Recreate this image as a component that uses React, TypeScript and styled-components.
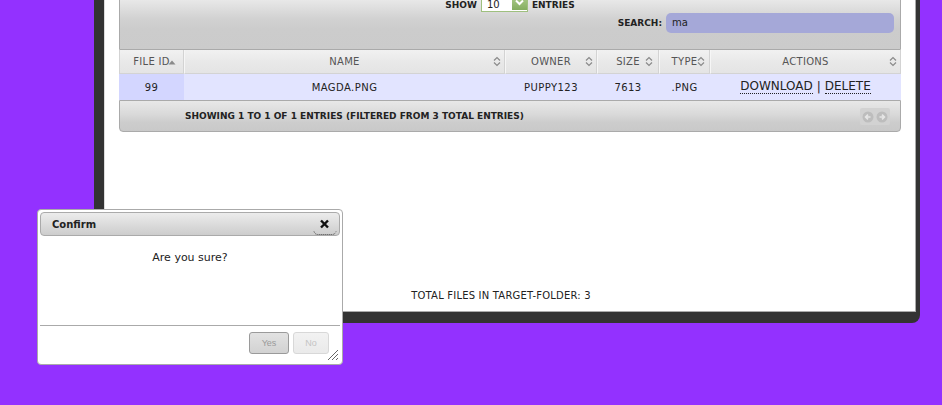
import React from "react";
import styled, { createGlobalStyle } from "styled-components";

const Global = createGlobalStyle`
  html, body { margin: 0; padding: 0; background: #9331ff; overflow: hidden; }
  body { font-family: "DejaVu Sans", Verdana, sans-serif; }
`;

const Page = styled.div`
  position: relative;
  width: 942px;
  height: 405px;
  overflow: hidden;
`;

const Frame = styled.div`
  margin: -30px 0 0 94px;
  width: 826px;
  box-sizing: border-box;
  padding: 0 4px 11px 10px;
  background: #333;
  border-radius: 0 0 8px 0;
`;

const Panel = styled.div`
  box-sizing: border-box;
  height: 342px;
  background: #fff;
  border-right: 1px solid #aaa;
  border-bottom: 1px solid #aaa;
  border-left: 1px solid #dcdcdc;
  padding: 10px 0 0 14px;
`;

const TableWrap = styled.div`
  width: 782px;
`;

const Toolbar = styled.div`
  box-sizing: border-box;
  border: 1px solid #aaa;
  border-radius: 4px 4px 0 0;
  background: linear-gradient(#f2f2f2 0%, #e8e8e8 28%, #d2d2d2 55%, #cccccc 70%, #cbcbcb 100%);
  padding: 11px 6px 16px;
  display: flex;
  flex-direction: column;
`;

const LengthRow = styled.div`
  height: 20px;
  display: flex;
  justify-content: center;
  align-items: baseline;
  gap: 4px;
`;

const SearchRow = styled.div`
  margin-top: 1px;
  height: 20px;
  display: flex;
  justify-content: flex-end;
  align-items: center;
  gap: 4px;
`;

const BoldLabel = styled.span`
  font-weight: bold;
  font-size: 9px;
  color: #222;
`;

const SelectBox = styled.div`
  box-sizing: border-box;
  width: 47px;
  height: 20px;
  border: 1px solid #9fc07f;
  background: #fff;
  display: inline-flex;
  align-items: flex-end;
  justify-content: space-between;
  padding: 0 0 0 5px;
  font-size: 10px;
  line-height: 12px;
  color: #222;
`;

const SelectArrow = styled.span`
  width: 15px;
  height: 16px;
  margin-bottom: 1px;
  align-self: flex-end;
  background: linear-gradient(#b3d192, #84ad5f);
  display: flex;
  align-items: center;
  justify-content: center;
`;

const SearchInput = styled.div`
  box-sizing: border-box;
  width: 228px;
  height: 20px;
  border-radius: 5px;
  background: #a5a8d8;
  padding: 0 6px;
  font-size: 10px;
  line-height: 20px;
  color: #222;
`;

const cols = "65px 321px 92px 62px 51px 191px";

const HeadRow = styled.div`
  display: grid;
  grid-template-columns: ${cols};
`;

const HeadCell = styled.div<{ $first?: boolean }>`
  position: relative;
  box-sizing: border-box;
  height: 24px;
  background: linear-gradient(#f1f1f1, #e9e9e9 50%, #e4e4e4);
  border-bottom: 1px solid #d3d3d3;
  border-right: 1px solid #d3d3d3;
  border-left: ${(p) => (p.$first ? "1px solid #d3d3d3" : "1px solid #f6f6f6")};
  font-size: 10px;
  letter-spacing: 0.3px;
  color: #555;
  display: flex;
  align-items: center;
  justify-content: center;
`;

const SortIcon = styled.span<{ $right: number }>`
  position: absolute;
  right: ${(p) => p.$right}px;
  top: 6px;
  display: flex;
`;

const DataRow = styled.div`
  display: grid;
  grid-template-columns: ${cols};
  background: #e2e4ff;
`;

const DataCell = styled.div<{ $sorted?: boolean; $big?: boolean }>`
  height: 26px;
  background: ${(p) => (p.$sorted ? "#d3d6ff" : "transparent")};
  font-size: ${(p) => (p.$big ? "12px" : "10px")};
  letter-spacing: ${(p) => (p.$big ? "0" : "0.45px")};
  color: #222;
  display: flex;
  align-items: center;
  justify-content: center;
`;

const ActionLink = styled.span`
  border-bottom: 1px dotted #222;
  line-height: 13px;
`;

const Sep = styled.span`
  margin: 0 4px;
`;

const FootBar = styled.div`
  box-sizing: border-box;
  height: 32px;
  border: 1px solid #aaa;
  border-radius: 0 0 4px 4px;
  background: linear-gradient(#e8e8e8, #d9d9d9 45%, #cdcdcd 70%, #c9c9c9);
  display: flex;
  align-items: center;
  justify-content: space-between;
  padding: 0 10px 0 65px;
`;

const Info = styled.span`
  font-weight: bold;
  font-size: 9px;
  color: #222;
`;

const Pager = styled.div`
  width: 30px;
  height: 17px;
  margin-top: 1px;
  background: #d2d2d2;
  border-radius: 2px;
  display: flex;
  align-items: center;
  justify-content: center;
  gap: 2px;
`;

const TotalText = styled.div`
  margin-top: 158px;
  padding-right: 32px;
  text-align: center;
  font-size: 10px;
  letter-spacing: 0.2px;
  line-height: 12px;
  color: #222;
`;

const Dialog = styled.div`
  position: absolute;
  left: 37px;
  top: 209px;
  width: 306px;
  height: 156px;
  box-sizing: border-box;
  background: #fff;
  border: 1px solid #aaa;
  border-radius: 4px;
  padding: 2px;
  display: flex;
  flex-direction: column;
`;

const TitleBar = styled.div`
  position: relative;
  box-sizing: border-box;
  height: 24px;
  border: 1px solid #aaa;
  border-radius: 4px;
  background: linear-gradient(#ececec, #dcdcdc 50%, #cdcdcd);
  padding: 0 11px;
  display: flex;
  align-items: center;
  font-weight: bold;
  font-size: 10px;
  color: #222;
`;

const CloseBtn = styled.span`
  position: absolute;
  right: 2px;
  top: 6px;
  display: flex;
`;

const DialogBody = styled.div`
  flex: 1;
  padding-top: 15px;
  text-align: center;
  font-size: 11px;
  line-height: 13px;
  color: #222;
`;

const ButtonPane = styled.div`
  box-sizing: border-box;
  border-top: 1px solid #aaa;
  height: 37px;
  padding: 6px 11px 0 0;
  display: flex;
  justify-content: flex-end;
  align-items: flex-start;
  gap: 4px;
`;

const DlgButton = styled.div<{ $w: number; $active?: boolean }>`
  box-sizing: border-box;
  width: ${(p) => p.$w}px;
  height: 22px;
  border-radius: 3px;
  border: 1px solid ${(p) => (p.$active ? "#9a9a9a" : "#d8d8d8")};
  background: ${(p) => (p.$active ? "linear-gradient(#e2e2e2, #d2d2d2)" : "linear-gradient(#f2f2f2, #eaeaea)")};
  color: ${(p) => (p.$active ? "#9a9a9a" : "#c4c4c4")};
  font-family: "Liberation Sans", Arial, sans-serif;
  font-size: 9px;
  display: flex;
  align-items: center;
  justify-content: center;
`;

const Grip = styled.span`
  position: absolute;
  right: 3px;
  bottom: 3px;
  display: flex;
`;

const Carets = () => (
  <svg width="8" height="11" viewBox="0 0 8 11">
    <path d="M1 4.5 L4 1.5 L7 4.5" fill="none" stroke="#8a8a8a" strokeWidth="1.2" />
    <path d="M1 6.5 L4 9.5 L7 6.5" fill="none" stroke="#8a8a8a" strokeWidth="1.2" />
  </svg>
);

const TriUp = () => (
  <svg width="8" height="11" viewBox="0 0 8 11">
    <path d="M0.5 8.5 L4 4.5 L7.5 8.5 Z" fill="#8a8a8a" />
  </svg>
);

const headers: { label: string; right: number; sorted?: boolean }[] = [
  { label: "FILE ID", right: 7, sorted: true },
  { label: "NAME", right: 3 },
  { label: "OWNER", right: 3 },
  { label: "SIZE", right: 5 },
  { label: "TYPE", right: 4 },
  { label: "ACTIONS", right: 3 },
];

export default function App() {
  return (
    <Page>
      <Global />
      <Frame>
        <Panel>
          <TableWrap>
            <Toolbar>
              <LengthRow>
                <BoldLabel>SHOW</BoldLabel>
                <SelectBox>
                  <span>10</span>
                  <SelectArrow>
                    <svg width="9" height="7" viewBox="0 0 9 7">
                      <path d="M1 1.5 L4.5 5 L8 1.5" fill="none" stroke="#fff" strokeWidth="2" />
                    </svg>
                  </SelectArrow>
                </SelectBox>
                <BoldLabel>ENTRIES</BoldLabel>
              </LengthRow>
              <SearchRow>
                <BoldLabel>SEARCH:</BoldLabel>
                <SearchInput>ma</SearchInput>
              </SearchRow>
            </Toolbar>
            <HeadRow>
              {headers.map((h, i) => (
                <HeadCell key={h.label} $first={i === 0}>
                  {h.label}
                  <SortIcon $right={h.right}>{h.sorted ? <TriUp /> : <Carets />}</SortIcon>
                </HeadCell>
              ))}
            </HeadRow>
            <DataRow>
              <DataCell $sorted>99</DataCell>
              <DataCell>MAGDA.PNG</DataCell>
              <DataCell>PUPPY123</DataCell>
              <DataCell>7613</DataCell>
              <DataCell>.PNG</DataCell>
              <DataCell $big>
                <ActionLink>DOWNLOAD</ActionLink>
                <Sep>|</Sep>
                <ActionLink>DELETE</ActionLink>
              </DataCell>
            </DataRow>
            <FootBar>
              <Info>SHOWING 1 TO 1 OF 1 ENTRIES (FILTERED FROM 3 TOTAL ENTRIES)</Info>
              <Pager>
                <svg width="12" height="12" viewBox="0 0 12 12">
                  <circle cx="6" cy="6" r="5.5" fill="#bdbdbd" />
                  <path d="M8.5 6 H3.8 M6 3.6 L3.6 6 L6 8.4" fill="none" stroke="#e6e6e6" strokeWidth="1.6" />
                </svg>
                <svg width="12" height="12" viewBox="0 0 12 12">
                  <circle cx="6" cy="6" r="5.5" fill="#bdbdbd" />
                  <path d="M3.5 6 H8.2 M6 3.6 L8.4 6 L6 8.4" fill="none" stroke="#e6e6e6" strokeWidth="1.6" />
                </svg>
              </Pager>
            </FootBar>
          </TableWrap>
          <TotalText>TOTAL FILES IN TARGET-FOLDER: 3</TotalText>
        </Panel>
      </Frame>

      <Dialog>
        <TitleBar>
          Confirm
          <CloseBtn>
            <svg width="24" height="17" viewBox="0 0 24 17">
              <path d="M8 1.5 L15 8.5 M15 1.5 L8 8.5" stroke="#111" strokeWidth="2.4" />
              <path d="M1 12.5 Q2 15.5 5 15.5 L19 15.5 Q22 15.5 23 12.5" fill="none" stroke="#444" strokeWidth="1" strokeDasharray="1 1" />
            </svg>
          </CloseBtn>
        </TitleBar>
        <DialogBody>Are you sure?</DialogBody>
        <ButtonPane>
          <DlgButton $w={40} $active>Yes</DlgButton>
          <DlgButton $w={36}>No</DlgButton>
        </ButtonPane>
        <Grip>
          <svg width="12" height="12" viewBox="0 0 12 12">
            <path d="M11 1 L1 11 M11 5 L5 11 M11 9 L9 11" stroke="#666" strokeWidth="1" />
          </svg>
        </Grip>
      </Dialog>
    </Page>
  );
}
